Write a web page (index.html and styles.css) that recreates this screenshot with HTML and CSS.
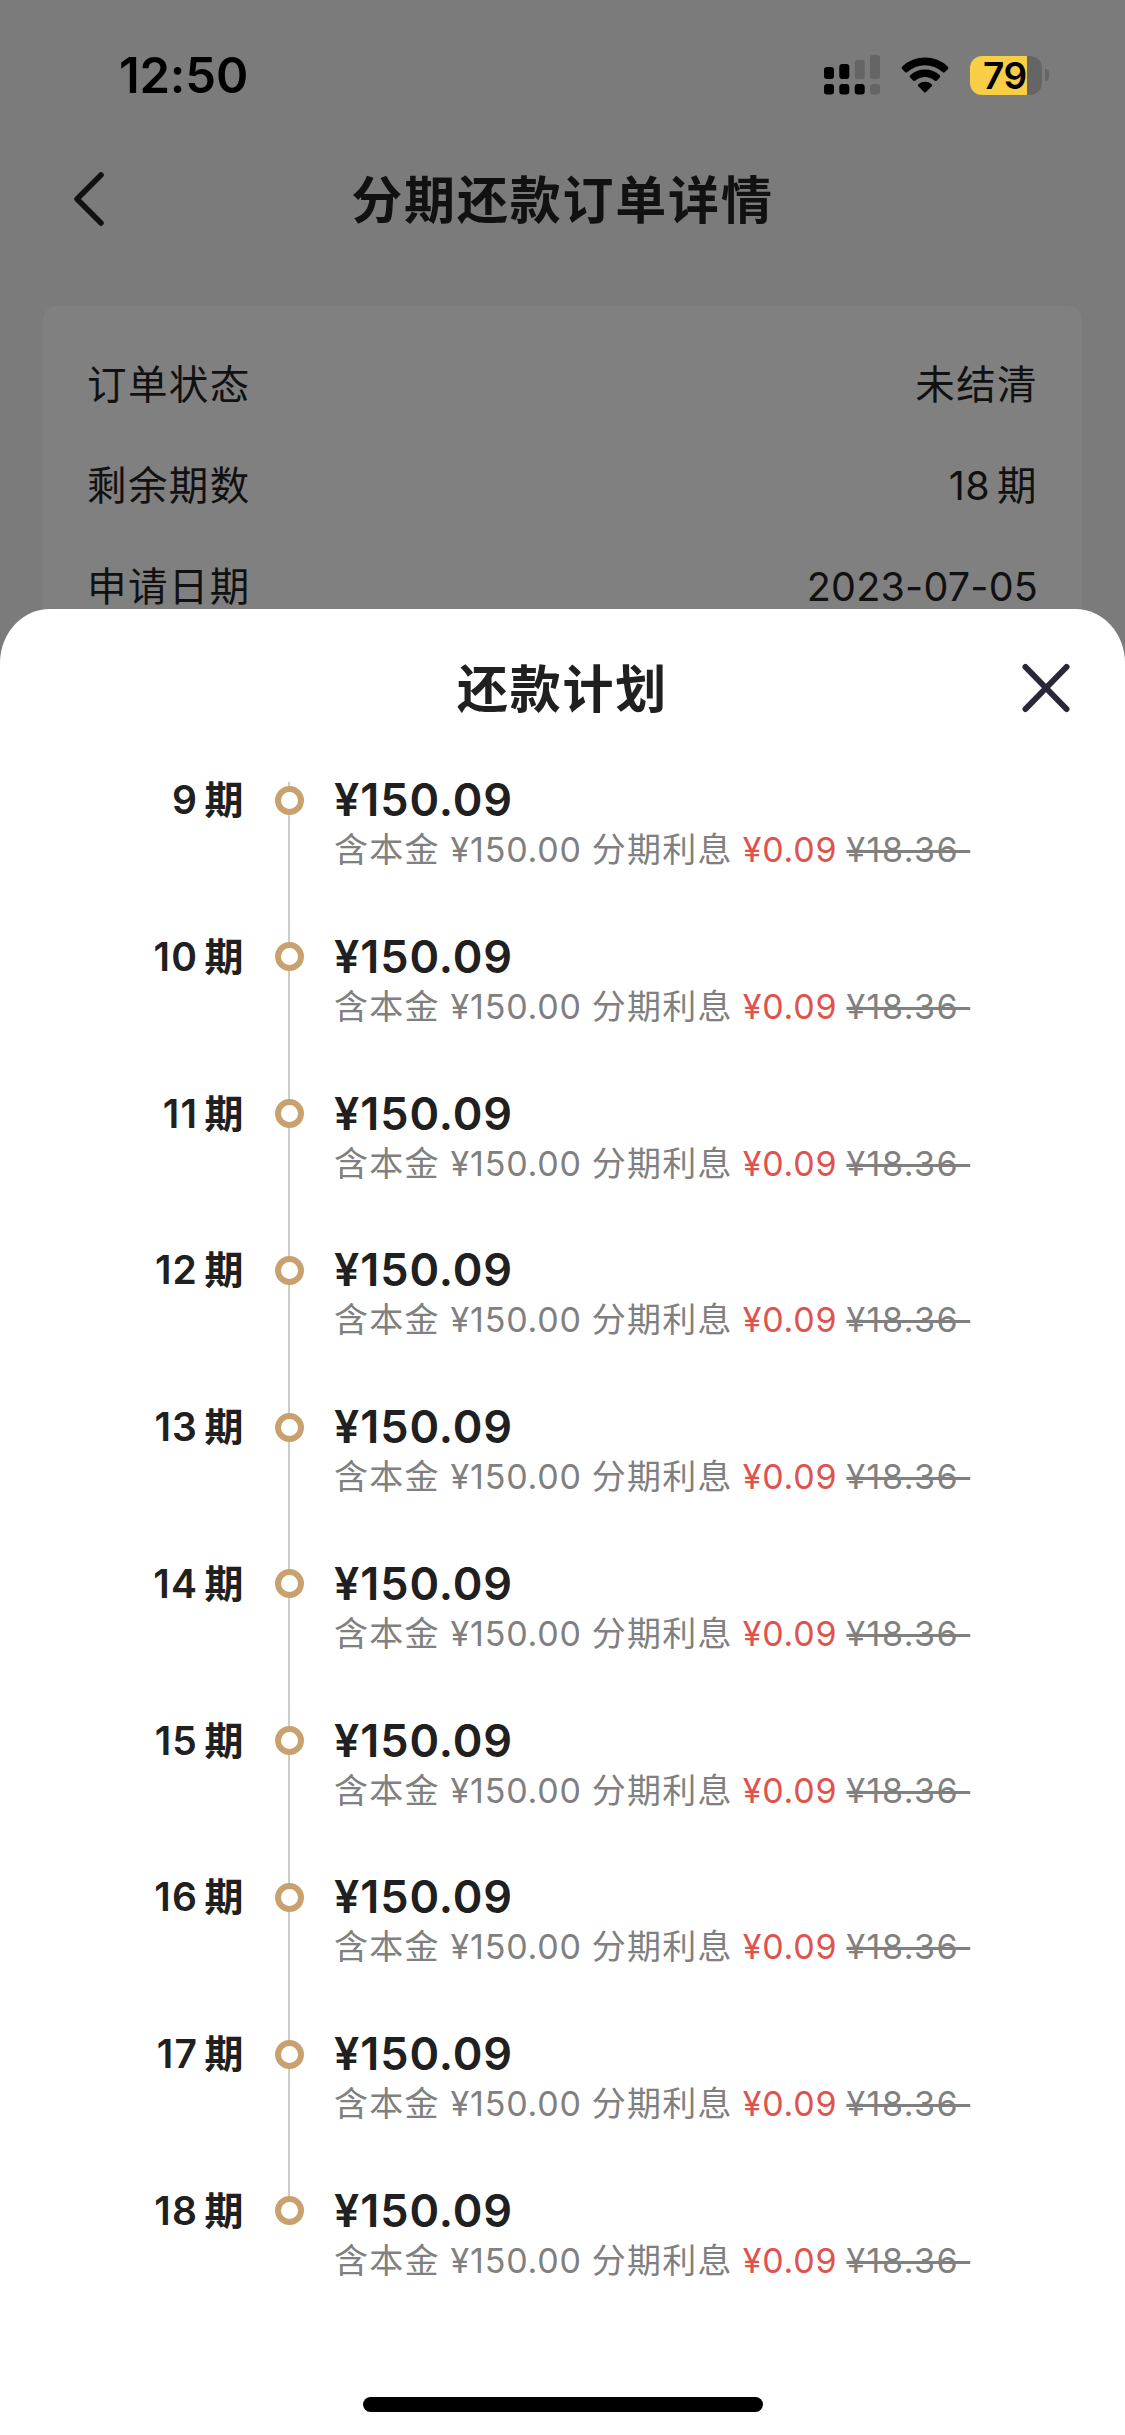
FILE: index.html
```html
<!DOCTYPE html>
<html lang="zh-CN">
<head>
<meta charset="utf-8">
<title>分期还款订单详情</title>
<link rel="stylesheet" href="styles.css">
</head>
<body>
<div class="screen">
  <header class="status">
    <span class="time">12:50</span>
    <div class="indicators">
      <svg class="signal" width="56" height="40" viewBox="0 0 56 40">
        <g fill="#000"><rect x="0" y="12" width="10" height="12" rx="3"/><rect x="15.3" y="9" width="10" height="15" rx="3"/><rect x="0" y="29" width="10" height="10.500" rx="3"/><rect x="15.3" y="29" width="10" height="10.500" rx="3"/><rect x="30.700" y="29" width="10" height="10.500" rx="3"/></g>
        <g fill="#656565"><rect x="30.700" y="5" width="10" height="19" rx="2.500"/><rect x="46" y="0" width="10" height="24" rx="2.500"/><rect x="46" y="29" width="10" height="10.500" rx="3"/></g>
      </svg>
      <svg class="wifi" width="48" height="36" viewBox="0 0 48 36">
        <path d="M1.300 9.500Q0 11 1.300 12.300L4 15.100Q5.200 16 6.500 14.900A26 26 0 0 1 41.500 14.900Q42.800 16 44 15.100L46.700 12.300Q48 11 46.700 9.500A33 33 0 0 0 1.300 9.500Z"/>
        <path d="M9.200 18.300Q8 19.500 9.200 20.600L12.300 23.700Q13.300 24.500 14.500 23.600A14.500 14.500 0 0 1 33.500 23.600Q34.700 24.500 35.700 23.700L38.800 20.600Q40 19.500 38.800 18.300A22 22 0 0 0 9.200 18.300Z"/>
        <path d="M17.300 27.200Q16.300 28.300 17.300 29.300L23 35Q24 36 25 35L30.700 29.300Q31.700 28.300 30.700 27.200A10.500 10.500 0 0 0 17.300 27.200Z"/>
      </svg>
      <div class="battery"><span>79</span></div>
      <i class="nub"></i>
    </div>
  </header>
  <nav class="navbar">
    <svg class="back" width="32" height="56" viewBox="0 0 32 56"><path d="M28 4L4 28L28 52"/></svg>
    <h1>分期还款订单详情</h1>
  </nav>
  <section class="card">
    <div class="row"><span>订单状态</span><span>未结清</span></div>
    <div class="row"><span>剩余期数</span><span><b>18</b>期</span></div>
    <div class="row"><span>申请日期</span><span class="date">2023-07-05</span></div>
  </section>
  <section class="sheet">
    <header class="sheet-head">
      <h2>还款计划</h2>
      <svg class="close" width="48" height="50" viewBox="0 0 48 50"><path d="M3.500 4L44.500 46M44.500 4L3.500 46"/></svg>
    </header>
    <ol class="plan">
      <li><div class="term"><b>9</b>期</div><i class="dot"></i><div class="info"><strong>¥150.09</strong><p><span>含本金</span><span class="principal">¥150.00</span><span class="label">分期利息</span><em>¥0.09</em><del>¥18.36&nbsp;</del></p></div></li>
      <li><div class="term"><b>10</b>期</div><i class="dot"></i><div class="info"><strong>¥150.09</strong><p><span>含本金</span><span class="principal">¥150.00</span><span class="label">分期利息</span><em>¥0.09</em><del>¥18.36&nbsp;</del></p></div></li>
      <li><div class="term"><b>11</b>期</div><i class="dot"></i><div class="info"><strong>¥150.09</strong><p><span>含本金</span><span class="principal">¥150.00</span><span class="label">分期利息</span><em>¥0.09</em><del>¥18.36&nbsp;</del></p></div></li>
      <li><div class="term"><b>12</b>期</div><i class="dot"></i><div class="info"><strong>¥150.09</strong><p><span>含本金</span><span class="principal">¥150.00</span><span class="label">分期利息</span><em>¥0.09</em><del>¥18.36&nbsp;</del></p></div></li>
      <li><div class="term"><b>13</b>期</div><i class="dot"></i><div class="info"><strong>¥150.09</strong><p><span>含本金</span><span class="principal">¥150.00</span><span class="label">分期利息</span><em>¥0.09</em><del>¥18.36&nbsp;</del></p></div></li>
      <li><div class="term"><b>14</b>期</div><i class="dot"></i><div class="info"><strong>¥150.09</strong><p><span>含本金</span><span class="principal">¥150.00</span><span class="label">分期利息</span><em>¥0.09</em><del>¥18.36&nbsp;</del></p></div></li>
      <li><div class="term"><b>15</b>期</div><i class="dot"></i><div class="info"><strong>¥150.09</strong><p><span>含本金</span><span class="principal">¥150.00</span><span class="label">分期利息</span><em>¥0.09</em><del>¥18.36&nbsp;</del></p></div></li>
      <li><div class="term"><b>16</b>期</div><i class="dot"></i><div class="info"><strong>¥150.09</strong><p><span>含本金</span><span class="principal">¥150.00</span><span class="label">分期利息</span><em>¥0.09</em><del>¥18.36&nbsp;</del></p></div></li>
      <li><div class="term"><b>17</b>期</div><i class="dot"></i><div class="info"><strong>¥150.09</strong><p><span>含本金</span><span class="principal">¥150.00</span><span class="label">分期利息</span><em>¥0.09</em><del>¥18.36&nbsp;</del></p></div></li>
      <li><div class="term"><b>18</b>期</div><i class="dot"></i><div class="info"><strong>¥150.09</strong><p><span>含本金</span><span class="principal">¥150.00</span><span class="label">分期利息</span><em>¥0.09</em><del>¥18.36&nbsp;</del></p></div></li>
    </ol>
    <div class="home"></div>
  </section>
</div>
</body>
</html>
```
FILE: styles.css
```css
* { box-sizing: border-box; margin: 0; padding: 0; }
body {
  font-family: Inter, "Noto Sans CJK SC", sans-serif;
  color: #202020;
  background: #7b7b7b;
}
.screen {
  position: relative;
  width: 1125px;
  height: 2435px;
  overflow: hidden;
  background: #7b7b7b;
}

/* Status bar */
.status {
  display: flex;
  justify-content: space-between;
  align-items: center;
  height: 150px;
  padding: 0 76px 0 119px;
  color: #000;
}
.time { font-size: 49px; font-weight: 600; letter-spacing: -0.2px; }
.indicators { display: flex; align-items: center; }
.wifi { margin: 0 21px 0 21px; }
.battery {
  width: 72px;
  height: 39px;
  padding-left: 13px;
  border-radius: 12px;
  background: linear-gradient(90deg, #f7ce46 57px, #656565 57px);
  font-size: 37px;
  font-weight: 600;
  line-height: 39px;
  letter-spacing: -0.5px;
}
.nub {
  width: 4px;
  height: 12px;
  margin-left: 3px;
  border-radius: 0 4px 4px 0;
  background: #656565;
}

/* Navigation */
.navbar {
  display: grid;
  grid-template-columns: 73px 1fr 73px;
  align-items: center;
  height: 98px;
  margin-bottom: 58px;
  color: #111;
}
.back { margin-left: 73px; fill: none; stroke: #111; stroke-width: 5.5; stroke-linecap: round; stroke-linejoin: round; }
h1, h2 { padding-top: 3px; font-size: 51px; font-weight: 600; letter-spacing: 1.8px; text-align: center; line-height: 60px; }

/* Order summary */
.card {
  height: 400px;
  margin: 0 43px;
  padding: 29px 44px;
  border-radius: 14px;
  background: #808080;
  color: #111;
}
.row {
  display: flex;
  justify-content: space-between;
  height: 101px;
  font-size: 39.5px;
  line-height: 101px;
  letter-spacing: 1.4px;
}
.row b { font-weight: 400; margin-right: 7px; letter-spacing: 0.4px; }
.row .date { letter-spacing: 0.2px; }

/* Repayment plan sheet */
.sheet {
  position: absolute;
  inset: 609px 0 0;
  display: flex;
  flex-direction: column;
  border-radius: 50px 50px 0 0 / 54px 54px 0 0;
  background: #fff;
}
.sheet-head {
  display: grid;
  grid-template-columns: 103px 1fr 103px;
  align-items: center;
  height: 158px;
}
.sheet-head h2 { grid-column: 2; }
.close { stroke: #2b2638; stroke-width: 6; stroke-linecap: round; }
.plan { list-style: none; }
.plan li {
  position: relative;
  display: grid;
  grid-template-columns: 245px 29px 1fr;
  height: 156.78px;
}
.plan li::before {
  content: "";
  position: absolute;
  left: 288px;
  top: 33px;
  width: 2px;
  height: 157px;
  background: #ccc;
}
.plan li:first-child::before { top: 15px; height: 175px; }
.plan li:last-child::before { display: none; }
.term {
  font-size: 39px;
  font-weight: 600;
  line-height: 66px;
  text-align: right;
  letter-spacing: 1.400px;
}
.term b { font-weight: 600; margin-right: 6.5px; letter-spacing: 1.200px; }
.dot {
  position: relative;
  left: 30px;
  width: 29px;
  height: 29px;
  margin-top: 18.500px;
  border: 6px solid #c9a16e;
  border-radius: 50%;
  background: #fff;
}
.info { padding-left: 60px; }
.info strong { display: block; font-size: 45px; font-weight: 600; line-height: 66px; letter-spacing: 0.900px; }
.info p {
  display: flex;
  margin-top: -8px;
  font-size: 34px;
  line-height: 49px;
  letter-spacing: 1.200px;
  color: #808080;
}
.principal { margin-left: 11px; letter-spacing: 0.800px; }
.label { margin-left: 10px; }
.info em { margin-left: 10px; font-style: normal; letter-spacing: 0.800px; color: #e0524c; }
.info del { margin-left: 9px; letter-spacing: 1.500px; text-decoration-thickness: 2.500px; }

.home {
  align-self: center;
  width: 400px;
  height: 15px;
  margin-top: 62px;
  border-radius: 8px;
  background: #000;
}
```
